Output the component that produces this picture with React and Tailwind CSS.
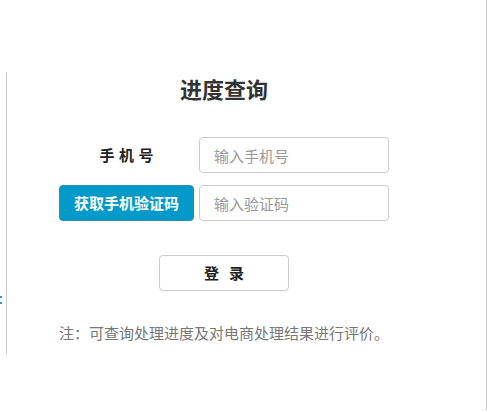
export default function App() {
  const font = { fontFamily: '"Noto Sans CJK SC", "Noto Sans", sans-serif' };
  return (
    <div
      className="w-[487px] h-[412px] bg-white overflow-hidden text-[#333]"
      style={font}
    >
      <div className="flex w-[487px] h-[410px] border-r border-[#c8c8c8]">
        {/* left edge sliver */}
        <div className="w-[6px] shrink-0 flex flex-col">
          <div className="mt-[296px] w-[2px] h-[8px] border-t-2 border-b-2 border-[#2a9fd6]" />
        </div>

        {/* query panel */}
        <div className="mt-[72px] h-[282px] w-[435px] shrink-0 border-l border-[#cccccc] flex flex-col items-center">
          <h1 className="mt-[1px] h-[30px] leading-[30px] text-[22px] font-bold text-[#333]">
            进度查询
          </h1>

          <div className="mt-[34px] flex flex-col gap-[12px]">
            <div className="flex items-center gap-[5px]">
              <label className="w-[135px] flex justify-center gap-[4.5px] text-[15px] font-bold text-[#222]">
                <span>手</span>
                <span>机</span>
                <span>号</span>
              </label>
              <input
                className="w-[190px] h-[36px] px-[14px] rounded-[4px] border border-[#cccccc] text-[15px] outline-none placeholder:text-[#999]"
                placeholder="输入手机号"
              />
            </div>
            <div className="flex items-center gap-[5px]">
              <button
                type="button"
                className="w-[135px] h-[36px] rounded-[4px] bg-[#0399c9] border border-[#2a8cb0] text-white text-[15px] font-bold"
              >
                获取手机验证码
              </button>
              <input
                className="w-[190px] h-[36px] px-[14px] rounded-[4px] border border-[#cccccc] text-[15px] outline-none placeholder:text-[#999]"
                placeholder="输入验证码"
              />
            </div>
          </div>

          <button
            type="button"
            className="mt-[34px] w-[130px] h-[36px] rounded-[4px] border border-[#cccccc] bg-white flex items-center justify-center gap-[10px] text-[15px] font-bold text-[#222]"
          >
            <span>登</span>
            <span>录</span>
          </button>

          <p className="mt-[31px] leading-[22px] text-[15px] text-[#777]">
            注：可查询处理进度及对电商处理结果进行评价。
          </p>
        </div>
      </div>
    </div>
  );
}
